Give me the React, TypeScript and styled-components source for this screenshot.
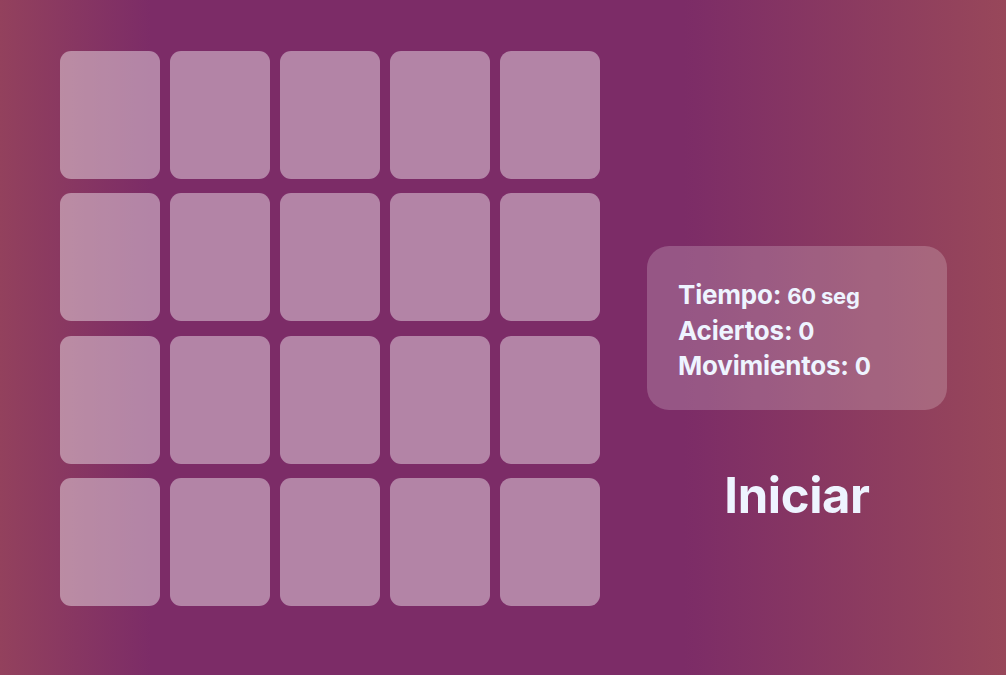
import React from 'react';
import styled, { createGlobalStyle } from 'styled-components';

const GlobalStyle = createGlobalStyle`
  html, body {
    margin: 0;
    padding: 0;
  }
  body {
    font-family: "Inter", "Noto Sans", sans-serif;
    background: linear-gradient(90deg, #93415d 0%, #7c2c67 15%, #7c2c67 68%, #98475a 100%);
    min-height: 100vh;
    color: #eef4ff;
  }
`;

const Page = styled.main`
  display: flex;
  align-items: flex-start;
  padding: 51px 0 0 60px;
  width: 1006px;
  height: 675px;
  box-sizing: border-box;
`;

const Board = styled.section`
  display: grid;
  grid-template-columns: repeat(5, 100px);
  grid-auto-rows: 128px;
  column-gap: 10px;
  row-gap: 14.3px;
`;

const Card = styled.div`
  border-radius: 11px;
  background: rgba(255, 255, 255, 0.42);
`;

const Side = styled.aside`
  display: flex;
  flex-direction: column;
  align-items: center;
  margin: 195px 0 0 47px;
  width: 300px;
`;

const Stats = styled.div`
  width: 300px;
  height: 164px;
  box-sizing: border-box;
  padding: 32px 31px;
  border-radius: 22px;
  background: rgba(255, 255, 255, 0.2);
  display: flex;
  flex-direction: column;
`;

const Stat = styled.p`
  margin: 0;
  font-size: 26px;
  font-weight: 650;
  line-height: 34.5px;
  letter-spacing: -0.2px;
  white-space: nowrap;
`;

const Value = styled.span<{ $small?: boolean }>`
  font-size: ${(p) => (p.$small ? '22px' : '24px')};
`;

const StartButton = styled.button`
  margin-top: 56px;
  border: none;
  background: none;
  color: #eef4ff;
  font-family: "Inter", "Noto Sans", sans-serif;
  font-size: 49px;
  font-weight: 650;
  letter-spacing: -0.4px;
  cursor: pointer;
  padding: 0;
`;

export default function App() {
  return (
    <>
      <GlobalStyle />
      <Page>
        <Board>
          {Array.from({ length: 20 }).map((_, i) => (
            <Card key={i} />
          ))}
        </Board>
        <Side>
          <Stats>
            <Stat>
              Tiempo: <Value $small>60 seg</Value>
            </Stat>
            <Stat>
              Aciertos: <Value>0</Value>
            </Stat>
            <Stat>
              Movimientos: <Value>0</Value>
            </Stat>
          </Stats>
          <StartButton>Iniciar</StartButton>
        </Side>
      </Page>
    </>
  );
}
